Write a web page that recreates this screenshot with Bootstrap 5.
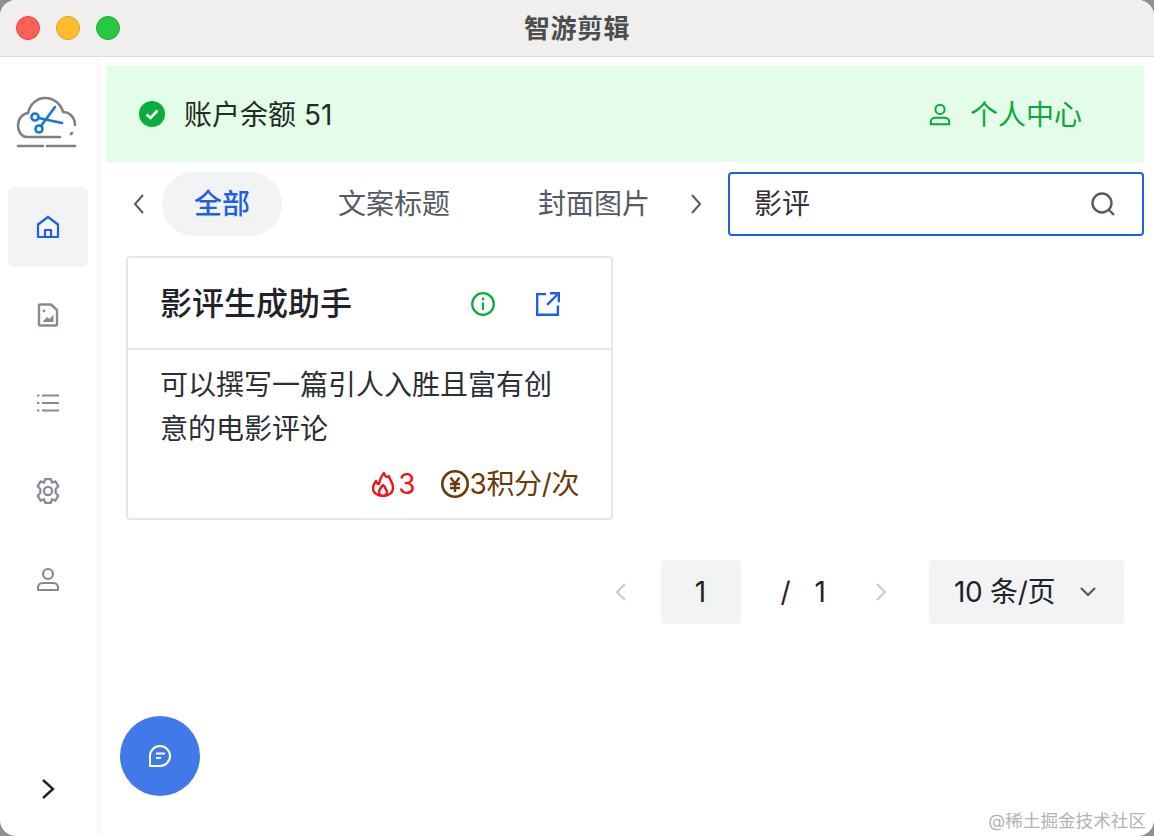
<!DOCTYPE html>
<html lang="zh-CN">
  <head>
    <meta charset="UTF-8" />
    <meta name="viewport" content="width=device-width, initial-scale=1.0" />
    <title>智游剪辑</title>
    <link href="https://cdn.jsdelivr.net/npm/bootstrap@5.3.0/dist/css/bootstrap.min.css" rel="stylesheet" />
    <style>
      html, body { height: 100%; }
      body {
        margin: 0;
        overflow: hidden;
        background: #8f8f8f;
        font-family: Inter, "Noto Sans CJK SC", sans-serif;
        color: #1f2329;
      }
      .app-window {
        position: relative;
        width: 1154px;
        height: 836px;
        background: #fff;
        border-radius: 16px;
        overflow: hidden;
      }
      .title-bar {
        height: 57px;
        background: #f0efed;
        border-bottom: 1px solid #dcdbd9;
      }
      .traffic { gap: 16px; padding-left: 16px; }
      .traffic span { width: 24px; height: 24px; border-radius: 50%; }
      .dot-red { background: #ff5f57; border: 1px solid #e5493f; }
      .dot-yellow { background: #febc2e; border: 1px solid #e0a024; }
      .dot-green { background: #28c840; border: 1px solid #1fae33; }
      .window-title {
        font-size: 26px;
        font-weight: 700;
        color: #4d4d4d;
        letter-spacing: 0.5px;
      }
      .app-body { height: 779px; }
      .side-rail {
        width: 98px;
        padding: 0 10px 35px 8px;
        box-shadow: 2px 0 6px rgba(0, 0, 0, 0.04);
        border-right: 1px solid #f6f6f6;
      }
      .rail-logo { height: 130px; }
      .rail-item {
        width: 80px;
        height: 80px;
        margin-bottom: 8px;
        border-radius: 6px;
        color: #868b93;
      }
      .rail-item.is-active { background: #f2f3f5; color: #1f5fe8; }
      .rail-toggle { color: #1f2329; }
      .main-pane { padding: 9px 10px 0 8px; min-width: 0; }
      .balance-bar {
        height: 96px;
        padding: 0 62px 0 33px;
        background: #e3fde8;
        line-height: 1;
      }
      .balance-left { gap: 19px; }
      .balance-text { font-size: 28px; color: #1f2d26; padding-top: 2px; }
      .center-link { color: #0aa83a; font-size: 28px; gap: 18px; text-decoration: none; }
      .center-text { padding-top: 2px; }
      .filter-row { margin-top: 10px; height: 64px; }
      .tab-strip { width: 622px; }
      .tab-pill {
        height: 64px;
        padding: 0 32px;
        border-radius: 32px;
        font-size: 28px;
        color: #555b64;
        white-space: nowrap;
      }
      .tab-pill.is-active { background: #f2f3f5; color: #1f5fe8; font-weight: 500; }
      .tab-arrow-prev { width: 56px; padding-left: 10px; color: #555b64; }
      .tab-arrow-next { width: 28px; color: #555b64; }
      .search-box {
        width: 416px;
        height: 64px;
        padding: 0 26px 0 24px;
        border: 2px solid #1f5fe8;
        border-radius: 4px;
      }
      .search-box input {
        border: 0;
        outline: 0;
        flex: 1;
        min-width: 0;
        font-size: 28px;
        color: #333;
        background: transparent;
        padding: 0;
      }
      .tool-card {
        width: 487px;
        height: 264px;
        margin: 20px 0 0 20px;
        border: 2px solid #e5e6e8;
        border-radius: 4px;
      }
      .tool-card .card-header {
        height: 92px;
        padding: 2px 51px 0 32px;
        background: #fff;
        border-bottom: 2px solid #e5e6e8;
        border-radius: 0;
      }
      .tool-name { font-size: 32px; font-weight: 500; color: #1f2329; line-height: 1; }
      .tool-actions { gap: 41px; }
      .tool-card .card-body { padding: 13px 32px 0; }
      .tool-desc { font-size: 28px; line-height: 44px; color: #2b2f36; margin: 0; }
      .tool-meta { font-size: 28px; line-height: 1; margin-top: 19px; gap: 25px; }
      .meta-hot { color: #f01414; }
      .meta-cost { color: #6b3a0c; gap: 1px; letter-spacing: -0.4px; }
      .pager-row { margin-top: 40px; padding-right: 20px; font-size: 28px; color: #1f2329; height: 64px; }
      .pager-box {
        width: 80px;
        height: 64px;
        margin-left: 33px;
        background: #f2f3f5;
        border-radius: 4px;
      }
      .pager-arrow { color: #c9cacc; }
      .pager-slash { margin-left: 40px; }
      .pager-total { margin-left: 24px; }
      .pager-next { margin-left: 48px; }
      .pager-size {
        width: 195px;
        height: 64px;
        margin-left: 41px;
        padding: 0 27px 0 25px;
        background: #f2f3f5;
        border-radius: 4px;
        white-space: nowrap;
        letter-spacing: -0.3px;
      }
      .chat-fab {
        position: absolute;
        left: 120px;
        top: 716px;
        width: 80px;
        height: 80px;
        padding: 0;
        border: 0;
        border-radius: 50%;
        background: #4279e8;
      }
      .juejin-mark {
        position: absolute;
        right: 8px;
        bottom: 5px;
        font-size: 17.600px;
        line-height: 1.2;
        color: #b3b3b3;
      }
    </style>
  </head>
  <body>
    <div class="app-window d-flex flex-column">
      <!-- title bar -->
      <header class="title-bar position-relative d-flex align-items-center flex-shrink-0">
        <div class="traffic d-flex">
          <span class="dot-red"></span>
          <span class="dot-yellow"></span>
          <span class="dot-green"></span>
        </div>
        <div class="window-title position-absolute top-50 start-50 translate-middle">智游剪辑</div>
      </header>

      <div class="app-body d-flex">
        <!-- left rail -->
        <nav class="side-rail d-flex flex-column flex-shrink-0">
          <div class="rail-logo d-flex justify-content-center align-items-center">
            <svg width="64" height="56" viewBox="0 0 64 56" fill="none" stroke-linecap="round" stroke-linejoin="round">
              <path d="M44 43H11C5 43 2 37 2 31.500C2 25 6 20 12 19C14 10 21 4 29 4C38 4 45 10 47 18C54 18 59 24 59 31" stroke="#808080" stroke-width="2.600" />
              <path d="M55 40l1-1" stroke="#808080" stroke-width="2.600" />
              <g stroke="#1479d6" stroke-width="2.600">
                <circle cx="19" cy="23" r="3.500" />
                <circle cx="23" cy="35" r="3.500" />
                <path d="M25 32L39 13M22.500 24L46 29" />
              </g>
              <path d="M2 52h25M31 52h28" stroke="#808080" stroke-width="2.600" />
            </svg>
          </div>
          <div class="rail-item is-active d-flex justify-content-center align-items-center">
            <svg width="26" height="26" viewBox="0 0 26 26" fill="none" stroke="currentColor" stroke-width="2.200">
              <path d="M3 10.500L13 3l10 7.500V23H3zM10 23v-7h6v7" stroke-linejoin="round" />
            </svg>
          </div>
          <div class="rail-item d-flex justify-content-center align-items-center">
            <svg width="26" height="26" viewBox="0 0 26 26" fill="none" stroke="currentColor" stroke-width="2.400">
              <path d="M5 2.500h11l6 5.500v14.500a1 1 0 0 1-1 1H5a1 1 0 0 1-1-1v-19a1 1 0 0 1 1-1z" stroke-linejoin="round" />
              <circle cx="9" cy="9" r="1.400" fill="currentColor" stroke="none" />
              <path d="M7.500 20l4.500-5 2.500 2 4-4.500V20z" fill="currentColor" stroke="none" />
            </svg>
          </div>
          <div class="rail-item d-flex justify-content-center align-items-center">
            <svg width="26" height="26" viewBox="0 0 26 26" fill="none" stroke="currentColor" stroke-width="2.200">
              <path d="M7 5.500h17M7 13h17M7 20.500h17" />
              <path d="M2 5.500h2.400M2 13h2.400M2 20.500h2.400" />
            </svg>
          </div>
          <div class="rail-item d-flex justify-content-center align-items-center">
            <svg width="26" height="26" viewBox="1.500 1.500 23 23" fill="none" stroke="currentColor" stroke-width="2" stroke-linejoin="round">
              <path d="M10.500 2.500h5l1 3.200 3-1.200 2.600 4.300-2.300 2.500v3.400l2.300 2.500-2.600 4.300-3-1.200-1 3.200h-5l-1-3.200-3 1.200-2.600-4.300 2.300-2.500v-3.400L3.900 8.800l2.600-4.300 3 1.200z" />
              <circle cx="13" cy="13" r="3.600" />
            </svg>
          </div>
          <div class="rail-item d-flex justify-content-center align-items-center">
            <svg width="26" height="26" viewBox="0 0 26 26" fill="none" stroke="currentColor" stroke-width="2.200">
              <circle cx="13" cy="8" r="5" />
              <path d="M3 24v-2.500c0-3 2.500-4.500 5-4.500h10c2.500 0 5 1.500 5 4.500V24z" stroke-linejoin="round" />
            </svg>
          </div>
          <div class="rail-toggle d-flex justify-content-center mt-auto">
            <svg width="22" height="24" viewBox="0 0 22 24" fill="none" stroke="currentColor" stroke-width="2.400">
              <path d="M6 3l10 9-10 9" />
            </svg>
          </div>
        </nav>

        <!-- main -->
        <main class="main-pane flex-grow-1">
          <div class="balance-bar d-flex align-items-center justify-content-between">
            <div class="balance-left d-flex align-items-center">
              <svg width="26" height="26" viewBox="0 0 26 26">
                <circle cx="13" cy="13" r="13" fill="#0aad3b" />
                <path d="M7.500 13.500l4 3.500 7-7.500" fill="none" stroke="#fff" stroke-width="2.600" />
              </svg>
              <span class="balance-text">账户余额 51</span>
            </div>
            <a class="center-link d-flex align-items-center" href="#">
              <svg width="24" height="24" viewBox="0 0 26 26" fill="none" stroke="currentColor" stroke-width="2.200">
                <circle cx="13" cy="8" r="5" />
                <path d="M3 24v-2.500c0-3 2.500-4.500 5-4.500h10c2.500 0 5 1.500 5 4.500V24z" stroke-linejoin="round" />
              </svg>
              <span class="center-text">个人中心</span>
            </a>
          </div>

          <div class="filter-row d-flex justify-content-between">
            <div class="tab-strip d-flex align-items-center">
              <div class="tab-arrow-prev d-flex justify-content-center">
                <svg width="14" height="22" viewBox="0 0 14 22" fill="none" stroke="currentColor" stroke-width="2"><path d="M11 2L3 11l8 9" /></svg>
              </div>
              <div class="tab-pill is-active d-flex align-items-center">全部</div>
              <div class="tab-pill d-flex align-items-center ms-4">文案标题</div>
              <div class="tab-pill d-flex align-items-center ms-4">封面图片</div>
              <div class="tab-arrow-next d-flex justify-content-center">
                <svg width="14" height="22" viewBox="0 0 14 22" fill="none" stroke="currentColor" stroke-width="2"><path d="M3 2l8 9-8 9" /></svg>
              </div>
            </div>
            <div class="search-box d-flex align-items-center">
              <input type="text" value="影评" aria-label="搜索" />
              <svg width="26" height="26" viewBox="0 0 26 26" fill="none" stroke="#555b64" stroke-width="2.400">
                <circle cx="12" cy="12" r="9.500" /><path d="M19 19l5 5" />
              </svg>
            </div>
          </div>

          <div class="card tool-card">
            <div class="card-header d-flex align-items-center justify-content-between">
              <div class="tool-name">影评生成助手</div>
              <div class="tool-actions d-flex align-items-center">
                <svg width="24" height="24" viewBox="0 0 24 24" fill="none" stroke="#0aad3b" stroke-width="2.200">
                  <circle cx="12" cy="12" r="10.800" />
                  <path d="M12 10.500V18" /><circle cx="12" cy="7" r="1.400" fill="#0aad3b" stroke="none" />
                </svg>
                <svg width="24" height="24" viewBox="0 0 26 26" fill="none" stroke="#1f5fe8" stroke-width="2.600">
                  <path d="M11 2.300H1.300v22.400h22.400v-10M12 14L23 3M15 1.300h9.700V11" />
                </svg>
              </div>
            </div>
            <div class="card-body">
              <p class="tool-desc">可以撰写一篇引人入胜且富有创意的电影评论</p>
              <div class="tool-meta d-flex justify-content-end align-items-center">
                <span class="meta-hot d-flex align-items-center gap-1">
                  <svg width="22" height="26" viewBox="0 0 22 26" fill="none" stroke="currentColor" stroke-width="2.400" stroke-linejoin="round">
                    <path d="M12 2c1 4 3 5 5 3 0 3 4 6 4 12 0 4.500-4 8-10 8S1 21.500 1 17c0-3 1.500-5 3-7 .500 2 1.500 3 3 3 1-4 2-8 5-11z" />
                    <path d="M11 14c-2 3-4 4-4 7 0 2 2 4 4 4s4-2 4-4c0-2-2-3-2-5z" />
                  </svg>
                  3
                </span>
                <span class="meta-cost d-flex align-items-center">
                  <svg width="28" height="28" viewBox="0 0 28 28" fill="none" stroke="currentColor">
                    <circle cx="14" cy="14" r="12.700" stroke-width="2.600" />
                    <path d="M9.500 7.500l4.500 6 4.500-6M9 14h10M9 18h10M14 14v8" stroke-width="2.400" />
                  </svg>
                  3积分/次
                </span>
              </div>
            </div>
          </div>

          <div class="pager-row d-flex align-items-center justify-content-end">
            <svg class="pager-arrow" width="14" height="22" viewBox="0 0 14 22" fill="none" stroke="currentColor" stroke-width="2"><path d="M11 3L3 11l8 8" /></svg>
            <div class="pager-box d-flex align-items-center justify-content-center">1</div>
            <span class="pager-slash">/</span>
            <span class="pager-total">1</span>
            <svg class="pager-arrow pager-next" width="14" height="22" viewBox="0 0 14 22" fill="none" stroke="currentColor" stroke-width="2"><path d="M3 3l8 8-8 8" /></svg>
            <div class="pager-size d-flex align-items-center justify-content-between">
              10 条/页
              <svg width="18" height="12" viewBox="0 0 18 12" fill="none" stroke="#555b64" stroke-width="2.200"><path d="M2 2l7 7 7-7" /></svg>
            </div>
          </div>
        </main>
      </div>

      <button class="chat-fab d-flex align-items-center justify-content-center" type="button" aria-label="聊天">
        <svg width="24" height="24" viewBox="0 0 24 24" fill="none" stroke="#fff" stroke-width="2">
          <path d="M2 22V12A10 10 0 1 1 12 22z" stroke-linejoin="round" />
          <path d="M8 9.500h9M8 14h5" />
        </svg>
      </button>
      <div class="juejin-mark">@稀土掘金技术社区</div>
    </div>
    <script src="https://cdn.jsdelivr.net/npm/bootstrap@5.3.0/dist/js/bootstrap.bundle.min.js"></script>
  </body>
</html>
